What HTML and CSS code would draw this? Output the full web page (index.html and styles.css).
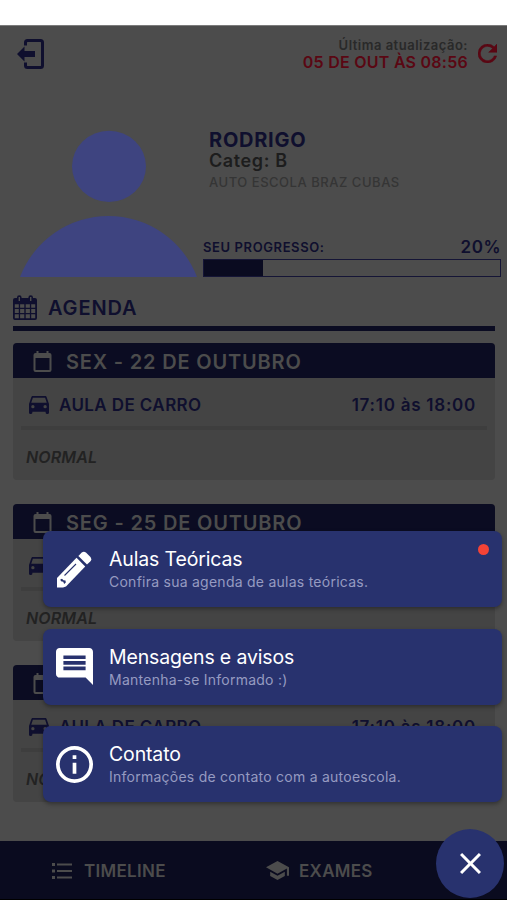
FILE: index.html
```html
<!DOCTYPE html>
<html lang="pt-BR">
<head>
<meta charset="utf-8">
<title>Agenda</title>
<link rel="stylesheet" href="styles.css">
</head>
<body>
<div class="app">
  <div class="status"></div>
  <header class="top">
    <svg class="logout" viewBox="0 0 28 32"><path d="M8.500 7.500V4.500a2 2 0 0 1 2-2H23.500a2 2 0 0 1 2 2v23a2 2 0 0 1-2 2H10.500a2 2 0 0 1-2-2V24.500" fill="none" stroke="currentColor" stroke-width="3"/><path d="M0 16l7.500-7.500v4.500h10.500v6H7.500v4.500z" fill="currentColor"/></svg>
    <div class="update">
      <div class="update-label"><span>Última atualização:</span></div>
      <div class="update-time"><span>05 DE OUT ÀS 08:56</span></div>
    </div>
    <svg class="refresh" viewBox="4 4 16 16"><path fill="currentColor" stroke="currentColor" stroke-width=".4" d="M17.650 6.350A7.958 7.958 0 0 0 12 4a8 8 0 1 0 7.730 10h-2.080A6 6 0 1 1 12 6c1.660 0 3.140.69 4.220 1.780L13 11h7V4z"/></svg>
  </header>
  <section class="profile">
    <svg class="avatar" viewBox="0 0 177 147"><ellipse cx="89" cy="36.300" rx="37" ry="35.600"/><path d="M0 147a94.700 94.700 0 0 1 177 0z"/></svg>
    <div class="info">
      <div class="name"><span>RODRIGO</span></div>
      <div class="categ"><span>Categ: B</span></div>
      <div class="school"><span>AUTO ESCOLA BRAZ CUBAS</span></div>
      <div class="progress-head"><span class="progress-label">SEU PROGRESSO:</span><span class="percent">20%</span></div>
      <div class="bar"><div class="fill"></div></div>
    </div>
  </section>
  <main class="agenda">
    <h2 class="agenda-title">
      <svg class="cal" viewBox="0 0 24 25"><path fill="currentColor" fill-rule="evenodd" d="M2 3h2V2.500a2.300 2.300 0 0 1 4.600 0V3h6.800v-.5a2.300 2.300 0 0 1 4.600 0V3h2a2 2 0 0 1 2 2v18a2 2 0 0 1-2 2H2a2 2 0 0 1-2-2V5a2 2 0 0 1 2-2zM1.800 9.200v3.600h4V9.200zm5.300 0v3.600h4.200V9.200zm5.600 0v3.600h4.200V9.200zm5.500 0v3.600h4V9.200zM1.800 14.100v3.900h4v-3.900zm5.300 0v3.900h4.200v-3.900zm5.600 0v3.900h4.200v-3.900zm5.500 0v3.900h4v-3.900zM1.800 19.300v3.900h4v-3.900zm5.300 0v3.900h4.200v-3.900zm5.600 0v3.900h4.200v-3.900zm5.500 0v3.900h4v-3.900zM5.600 2v4h1.400V2zm11.400 0v4h1.400V2z"/></svg>
      <span>AGENDA</span>
    </h2>
    <article class="card">
      <div class="day"><svg class="day-icon" viewBox="3 1 18 21"><path fill="currentColor" d="M19 3h-1V1h-2v2H8V1H6v2H5a2 2 0 0 0-2 2v15a2 2 0 0 0 2 2h14a2 2 0 0 0 2-2V5a2 2 0 0 0-2-2zm0 17H5V8h14z"/></svg><span>SEX - 22 DE OUTUBRO</span></div>
      <div class="lesson"><svg class="car" viewBox="3 5 18 16"><path fill="currentColor" d="M18.920 6.010C18.720 5.420 18.160 5 17.500 5h-11c-.66 0-1.210.42-1.420 1.010L3 12v8c0 .55.45 1 1 1h1c.55 0 1-.45 1-1v-1h12v1c0 .55.45 1 1 1h1c.55 0 1-.45 1-1v-8zM6.500 16a1.500 1.500 0 1 1 0-3 1.500 1.500 0 0 1 0 3zm11 0a1.500 1.500 0 1 1 0-3 1.500 1.500 0 0 1 0 3zM5 11l1.500-4.500h11L19 11z"/></svg><span class="what">AULA DE CARRO</span><span class="when">17:10 às 18:00</span></div>
      <div class="kind"><span>NORMAL</span></div>
    </article>
    <article class="card">
      <div class="day"><svg class="day-icon" viewBox="3 1 18 21"><path fill="currentColor" d="M19 3h-1V1h-2v2H8V1H6v2H5a2 2 0 0 0-2 2v15a2 2 0 0 0 2 2h14a2 2 0 0 0 2-2V5a2 2 0 0 0-2-2zm0 17H5V8h14z"/></svg><span>SEG - 25 DE OUTUBRO</span></div>
      <div class="lesson"><svg class="car" viewBox="3 5 18 16"><path fill="currentColor" d="M18.920 6.010C18.720 5.420 18.160 5 17.500 5h-11c-.66 0-1.210.42-1.420 1.010L3 12v8c0 .55.45 1 1 1h1c.55 0 1-.45 1-1v-1h12v1c0 .55.45 1 1 1h1c.55 0 1-.45 1-1v-8zM6.500 16a1.500 1.500 0 1 1 0-3 1.500 1.500 0 0 1 0 3zm11 0a1.500 1.500 0 1 1 0-3 1.500 1.500 0 0 1 0 3zM5 11l1.500-4.500h11L19 11z"/></svg></div>
      <div class="kind"><span>NORMAL</span></div>
    </article>
    <article class="card">
      <div class="day"><svg class="day-icon" viewBox="3 1 18 21"><path fill="currentColor" d="M19 3h-1V1h-2v2H8V1H6v2H5a2 2 0 0 0-2 2v15a2 2 0 0 0 2 2h14a2 2 0 0 0 2-2V5a2 2 0 0 0-2-2zm0 17H5V8h14z"/></svg></div>
      <div class="lesson"><svg class="car" viewBox="3 5 18 16"><path fill="currentColor" d="M18.920 6.010C18.720 5.420 18.160 5 17.500 5h-11c-.66 0-1.210.42-1.420 1.010L3 12v8c0 .55.45 1 1 1h1c.55 0 1-.45 1-1v-1h12v1c0 .55.45 1 1 1h1c.55 0 1-.45 1-1v-8zM6.500 16a1.500 1.500 0 1 1 0-3 1.500 1.500 0 0 1 0 3zm11 0a1.500 1.500 0 1 1 0-3 1.500 1.500 0 0 1 0 3zM5 11l1.500-4.500h11L19 11z"/></svg><span class="what">AULA DE CARRO</span><span class="when">17:10 às 18:00</span></div>
      <div class="kind"><span>NORMAL</span></div>
    </article>
  </main>
  <nav class="tabs">
    <div class="tab timeline"><svg class="list" viewBox="0 0 20 16"><path fill="currentColor" d="M0 0h3v3H0zM5 .5h15v2H5zM0 6.500h3v3H0zM5 7h15v2H5zM0 13h3v3H0zM5 13.500h15v2H5z"/></svg><span>TIMELINE</span></div>
    <div class="tab exams"><svg class="cap" viewBox="1 3 22 18"><path fill="currentColor" d="M5 13.180v4L12 21l7-3.820v-4L12 17zM12 3L1 9l11 6 9-4.910V17h2V9z"/></svg><span>EXAMES</span></div>
  </nav>
  <div class="menu">
    <a class="item">
      <svg class="item-icon" viewBox="0 0 37 37"><path fill="#fff" d="M1 36.500v-9.500L20.500 6.800l8.700 8.700L10 35.500l-3 1z"/><path fill="#fff" d="M22.400 4.900l3.100-3.100a3.500 3.500 0 0 1 4.700 0l4 4a3.500 3.500 0 0 1 0 4.700l-3.200 3.100z"/><path fill="none" stroke="#28326e" stroke-width="1.100" d="M8.500 24.500L20 13"/><path fill="#28326e" d="M4.300 28.500l1.700-.8 1.500 1.500 2 .4.300 2-1.600 1.400-1-2.200-2.200-.5z"/></svg>
      <div class="copy"><div class="title"><span>Aulas Teóricas</span></div><div class="sub"><span>Confira sua agenda de aulas teóricas.</span></div></div>
      <i class="dot"></i>
    </a>
    <a class="item">
      <svg class="item-icon" viewBox="2 2 20 20"><path fill="#fff" d="M21.990 4c0-1.100-.89-2-1.990-2H4c-1.100 0-2 .9-2 2v12c0 1.100.9 2 2 2h14l4 4zM18 14H6v-2h12zm0-3H6V9h12zm0-3H6V6h12z"/></svg>
      <div class="copy"><div class="title"><span>Mensagens e avisos</span></div><div class="sub"><span>Mantenha-se Informado :)</span></div></div>
    </a>
    <a class="item">
      <svg class="item-icon" viewBox="2 2 20 20"><path fill="#fff" d="M11 7h2v2h-2zm0 4h2v6h-2zm1-9a10 10 0 1 0 0 20 10 10 0 0 0 0-20zm0 18a8 8 0 1 1 0-16 8 8 0 0 1 0 16z"/></svg>
      <div class="copy"><div class="title"><span>Contato</span></div><div class="sub"><span>Informações de contato com a autoescola.</span></div></div>
    </a>
  </div>
  <button class="fab" aria-label="Fechar"><svg viewBox="5 5 14 14"><path fill="#fff" d="M19 6.410L17.590 5 12 10.590 6.410 5 5 6.410 10.590 12 5 17.590 6.410 19 12 13.410 17.590 19 19 17.590 13.410 12z"/></svg></button>
</div>
</body>
</html>
```
FILE: styles.css
```css
* { box-sizing: border-box; }
body { margin: 0; font-family: Inter, "Liberation Sans", sans-serif; color: #0f0f2e; }
svg { display: block; flex: none; }
.app { position: relative; width: 507px; height: 900px; overflow: hidden; background: #4c4c4c; display: flex; flex-direction: column; white-space: nowrap; }
.status { height: 25px; background: #fff; flex: none; }
.top { height: 105px; flex: none; display: flex; align-items: flex-start; padding: 12px 10px 0 17px; border-top: 1px solid #7b7b7b; }
.logout { width: 28px; height: 32px; color: #0f0f2e; }
.update { margin-left: auto; text-align: right; font-weight: 600; }
.update-label { font-size: 13px; line-height: 15px; letter-spacing: .5px; color: #292929; }
.update-time { font-size: 16px; line-height: 18px; letter-spacing: .25px; color: #5a0713; }
.refresh { width: 19px; height: 19px; margin: 6px 0 0 10px; color: #5a0713; }
.profile { height: 147px; flex: none; display: flex; padding: 0 6px 0 20px; }
.avatar { width: 177px; height: 147px; fill: #3e4480; }
.info { flex: 1; margin-left: 6px; display: flex; flex-direction: column; font-weight: 600; }
.name, .categ, .school { padding-left: 6px; }
.name { font-size: 20px; line-height: 20px; letter-spacing: .75px; font-weight: 700; }
.categ { font-size: 18px; line-height: 21px; letter-spacing: .6px; color: #1d1d1d; }
.school { font-size: 13px; line-height: 22px; letter-spacing: .53px; color: #353535; font-weight: 500; }
.progress-head { display: flex; justify-content: space-between; align-items: center; height: 24px; margin-top: auto; }
.progress-label { font-size: 13px; letter-spacing: .6px; }
.percent { font-size: 17px; letter-spacing: .5px; }
.bar { height: 18px; border: 1px solid #151536; }
.fill { width: 20%; height: 100%; background: #0a0b20; }
.agenda { flex: none; height: 564px; padding: 18px 12px 0 13px; }
.agenda-title { margin: 0 0 12px; height: 36px; display: flex; align-items: flex-start; gap: 11px; border-bottom: 5px solid #0b0c22; font-size: 20px; line-height: 26px; font-weight: 600; letter-spacing: .85px; }
.cal { width: 24px; height: 25px; }
.card { height: 137px; margin-bottom: 24px; border-radius: 4px; overflow: hidden; background: #444; }
.day { height: 35px; background: #0b0c22; color: #4c4c4c; display: flex; align-items: center; gap: 14px; padding: 2px 0 0 20px; font-size: 20px; font-weight: 600; letter-spacing: .82px; }
.day-icon { width: 19px; height: 21px; }
.lesson { height: 52px; margin: 0 8px; padding: 5px 11px 0 8px; display: flex; align-items: center; border-bottom: 4px solid #3e3e3e; font-size: 17px; font-weight: 600; letter-spacing: .4px; }
.car { width: 20px; height: 18px; margin-right: 10px; }
.when { margin-left: auto; letter-spacing: .75px; }
.kind { height: 50px; padding: 4px 13px 0; display: flex; align-items: center; font-size: 16px; font-style: italic; font-weight: 600; letter-spacing: .15px; color: #222; }
.tabs { flex: none; height: 59px; background: #0a0b1f; border-bottom: 1px solid #000; display: flex; color: #4c4c4c; font-size: 17px; font-weight: 600; letter-spacing: .3px; }
.tab { display: flex; align-items: center; padding-top: 1px; }
.timeline { padding-left: 52px; width: 266px; gap: 12px; }
.exams { gap: 10px; }
.list { width: 20px; height: 16px; }
.cap { width: 23px; height: 19px; }
.menu { position: absolute; left: 43px; top: 531px; width: 459px; display: flex; flex-direction: column; gap: 21.500px; }
.item { position: relative; height: 76px; border-radius: 8px; background: #28326e; box-shadow: 0 2px 4px rgba(0,0,0,.35); display: flex; align-items: center; padding-left: 13px; gap: 16px; color: #fff; }
.item-icon { width: 37px; height: 37px; }
.copy { padding-top: 2px; }
.title { font-size: 19.500px; line-height: 24px; letter-spacing: -.15px; }
.sub { font-size: 14px; line-height: 22px; letter-spacing: .25px; color: #969bc1; }
.dot { position: absolute; right: 13px; top: 13px; width: 11px; height: 11px; border-radius: 50%; background: #f44336; }
.fab { position: absolute; left: 436px; top: 829px; width: 68px; height: 69px; border: 0; padding: 0; border-radius: 50%; background: #28326e; display: flex; align-items: center; justify-content: center; }
.fab svg { width: 21px; height: 21px; }
```
